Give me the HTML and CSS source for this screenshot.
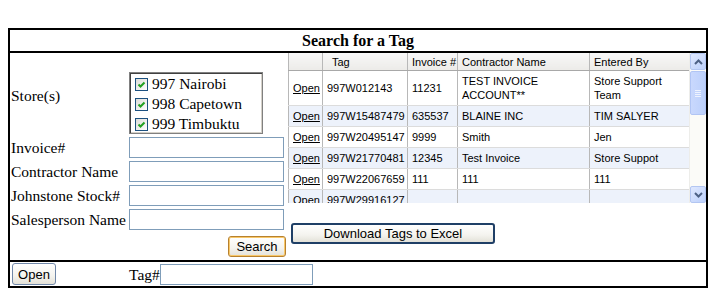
FILE: index.html
```html
<!DOCTYPE html>
<html lang="en">
<head>
  <meta charset="UTF-8" />
  <title>Search for a Tag</title>
  <link rel="stylesheet" href="styles.css">
</head>
<body>
  <div class="panel">
    <div class="title">Search for a Tag</div>

    <div class="main">
      <!-- search criteria -->
      <div class="criteria">
        <span class="lbl store-lbl">Store(s)</span>
        <div class="stores">
          <label class="store"><span class="check"><svg width="11" height="11" viewBox="0 0 11 11"><path d="M2.5 5.5 L4.5 7.5 L8.5 3.5" fill="none" stroke="#21a121" stroke-width="2"/></svg></span>997 Nairobi</label>
          <label class="store"><span class="check"><svg width="11" height="11" viewBox="0 0 11 11"><path d="M2.5 5.5 L4.5 7.5 L8.5 3.5" fill="none" stroke="#21a121" stroke-width="2"/></svg></span>998 Capetown</label>
          <label class="store"><span class="check"><svg width="11" height="11" viewBox="0 0 11 11"><path d="M2.5 5.5 L4.5 7.5 L8.5 3.5" fill="none" stroke="#21a121" stroke-width="2"/></svg></span>999 Timbuktu</label>
        </div>

        <span class="lbl">Invoice#</span>
        <input class="field" type="text">
        <span class="lbl">Contractor Name</span>
        <input class="field" type="text">
        <span class="lbl">Johnstone Stock#</span>
        <input class="field" type="text">
        <span class="lbl">Salesperson Name</span>
        <input class="field" type="text">

        <span></span>
        <button class="btn btn-search">Search</button>
      </div>

      <!-- results grid -->
      <div class="results">
        <div class="grid-wrap">
          <div class="grid-scroll">
            <table class="grid">
              <colgroup>
                <col style="width:34px"><col style="width:85px"><col style="width:50px"><col style="width:132px"><col style="width:101px">
              </colgroup>
              <thead>
                <tr><th></th><th class="th-tag">Tag</th><th>Invoice #</th><th>Contractor Name</th><th>Entered By</th></tr>
              </thead>
              <tbody>
                <tr><td><a href="#">Open</a></td><td class="tag">997W012143</td><td>11231</td><td>TEST INVOICE ACCOUNT**</td><td>Store Support Team</td></tr>
                <tr class="alt"><td><a href="#">Open</a></td><td class="tag">997W15487479</td><td>635537</td><td>BLAINE INC</td><td>TIM SALYER</td></tr>
                <tr><td><a href="#">Open</a></td><td class="tag">997W20495147</td><td>9999</td><td>Smith</td><td>Jen</td></tr>
                <tr class="alt"><td><a href="#">Open</a></td><td class="tag">997W21770481</td><td>12345</td><td>Test Invoice</td><td>Store Suppot</td></tr>
                <tr><td><a href="#">Open</a></td><td class="tag">997W22067659</td><td>111</td><td>111</td><td>111</td></tr>
                <tr class="alt"><td><a href="#">Open</a></td><td class="tag">997W29916127</td><td></td><td></td><td></td></tr>
                <tr><td><a href="#">Open</a></td><td class="tag">997W30012255</td><td></td><td></td><td></td></tr>
              </tbody>
            </table>
          </div>
          <div class="scrollbar">
            <div class="sb-btn"><svg width="9" height="6" viewBox="0 0 9 6"><path d="M1 5 L4.5 1.5 L8 5" fill="none" stroke="#4d6185" stroke-width="2"/></svg></div>
            <div class="sb-thumb"><span></span><span></span><span></span><span></span></div>
            <div class="sb-track"></div>
            <div class="sb-btn"><svg width="9" height="6" viewBox="0 0 9 6"><path d="M1 1 L4.5 4.5 L8 1" fill="none" stroke="#4d6185" stroke-width="2"/></svg></div>
          </div>
        </div>
        <button class="btn btn-download">Download Tags to Excel</button>
      </div>
    </div>

    <div class="footer">
      <div class="footer-left"><button class="btn btn-open">Open</button></div>
      <span class="lbl">Tag#</span><input class="field tag-field" type="text">
    </div>
  </div>
</body>
</html>
```

FILE: styles.css
```css
body {
  margin: 8px;
  background: #fff;
  font-family: 'Liberation Serif', 'Times New Roman', serif;
  color: #000;
}
.panel {
  width: 696px;
  margin-top: 20px;
  border: 2px solid #000;
}
.title {
  height: 21px;
  line-height: 21px;
  text-align: center;
  font-weight: bold;
  font-size: 16px;
  border-bottom: 2px solid #000;
}
.main {
  display: flex;
  height: 207px;
  border-bottom: 2px solid #000;
}
.criteria {
  width: 278px;
  display: grid;
  grid-template-columns: 119px 155px;
  grid-auto-rows: 21px;
  grid-template-rows: 62px;
  row-gap: 3px;
  align-items: center;
  padding-top: 19px;
  box-sizing: border-box;
}
.lbl {
  font-size: 15.5px;
  line-height: 17px;
  padding-left: 1px;
  white-space: nowrap;
}
.store-lbl {
  align-self: start;
  margin-top: 15px;
}
.stores {
  width: 134px;
  height: 62px;
  box-sizing: border-box;
  border: 1px solid #808080;
  box-shadow: inset 1px 1px 0 #404040, inset -1px -1px 0 #d4d0c8;
  padding: 1px 0 0 5px;
}
.store {
  display: flex;
  align-items: center;
  height: 20px;
  font-size: 15.5px;
}
.check {
  width: 11px;
  height: 11px;
  border: 1px solid #1c5180;
  background: linear-gradient(135deg, #dcdcd7, #fff);
  margin-right: 4px;
  display: flex;
}
.field {
  width: 155px;
  height: 21px;
  box-sizing: border-box;
  border: 1px solid #7f9db9;
  margin: 0;
  padding: 1px 3px;
  background: #fff;
}
.btn {
  font-family: 'Liberation Sans', Arial, sans-serif;
  font-size: 13px;
  color: #000;
  background: linear-gradient(#ffffff, #f4f3ee 60%, #e3e1d8);
  border: 1px solid #003c74;
  border-radius: 3px;
  padding: 0;
  box-sizing: border-box;
}
.btn-search {
  justify-self: end;
  margin-right: -2px;
  margin-top: 5px;
  width: 58px;
  height: 21px;
  border-color: #b7812f;
  box-shadow: inset 0 0 0 1px #f9c868;
}
.results {
  width: 418px;
}
.grid-wrap {
  display: flex;
  height: 150px;
}
.grid-scroll {
  width: 402px;
  overflow: hidden;
}
.grid {
  table-layout: fixed;
  width: 402px;
  border-collapse: collapse;
  font-family: 'Liberation Sans', Arial, sans-serif;
  font-size: 11px;
  line-height: 14px;
}
.grid th {
  font-weight: normal;
  text-align: left;
  white-space: nowrap;
  overflow: hidden;
  padding: 2px 0 1px 4px;
  background: linear-gradient(#f8f8f8, #ecebe8);
  border-left: 1px solid #b8b8b8;
  border-bottom: 1px solid #a8a8a8;
}
.grid th.th-tag {
  padding-left: 9px;
}
.grid td {
  padding: 3px 4px;
  border-left: 1px solid #b8b8b8;
  border-bottom: 1px solid #dcdcdc;
  vertical-align: middle;
  overflow: hidden;
}
.grid td.tag {
  white-space: nowrap;
}
.grid tr.alt td {
  background: #edf2fb;
}
.grid a {
  color: #000;
}
.scrollbar {
  width: 16px;
  display: flex;
  flex-direction: column;
  background: #fbfbf8;
  border-left: 1px solid #ededea;
}
.sb-btn {
  height: 17px;
  box-sizing: border-box;
  border: 1px solid #b3c6f2;
  border-radius: 2px;
  background: linear-gradient(135deg, #dfe8ff, #bcd0fb);
  display: flex;
  align-items: center;
  justify-content: center;
}
.sb-thumb {
  height: 44px;
  margin-top: 1px;
  box-sizing: border-box;
  border: 1px solid #b1c5f4;
  border-radius: 2px;
  background: linear-gradient(90deg, #c9d8fd, #bcd0fb);
  display: flex;
  flex-direction: column;
  align-items: center;
  justify-content: center;
  gap: 1px;
}
.sb-thumb span {
  width: 6px;
  height: 1px;
  background: #eef3ff;
}
.sb-track {
  flex: 1;
}
.btn-download {
  width: 204px;
  height: 21px;
  margin: 20px 0 0 3px;
  border: 2px solid #1f3f66;
}
.footer {
  display: flex;
  align-items: center;
  height: 24px;
}
.footer-left {
  width: 119px;
}
.btn-open {
  width: 44px;
  height: 22px;
  margin-left: 2px;
  border-color: #7087a8;
}
.footer .lbl {
  padding-left: 0;
}
.tag-field {
  width: 153px;
}
```
